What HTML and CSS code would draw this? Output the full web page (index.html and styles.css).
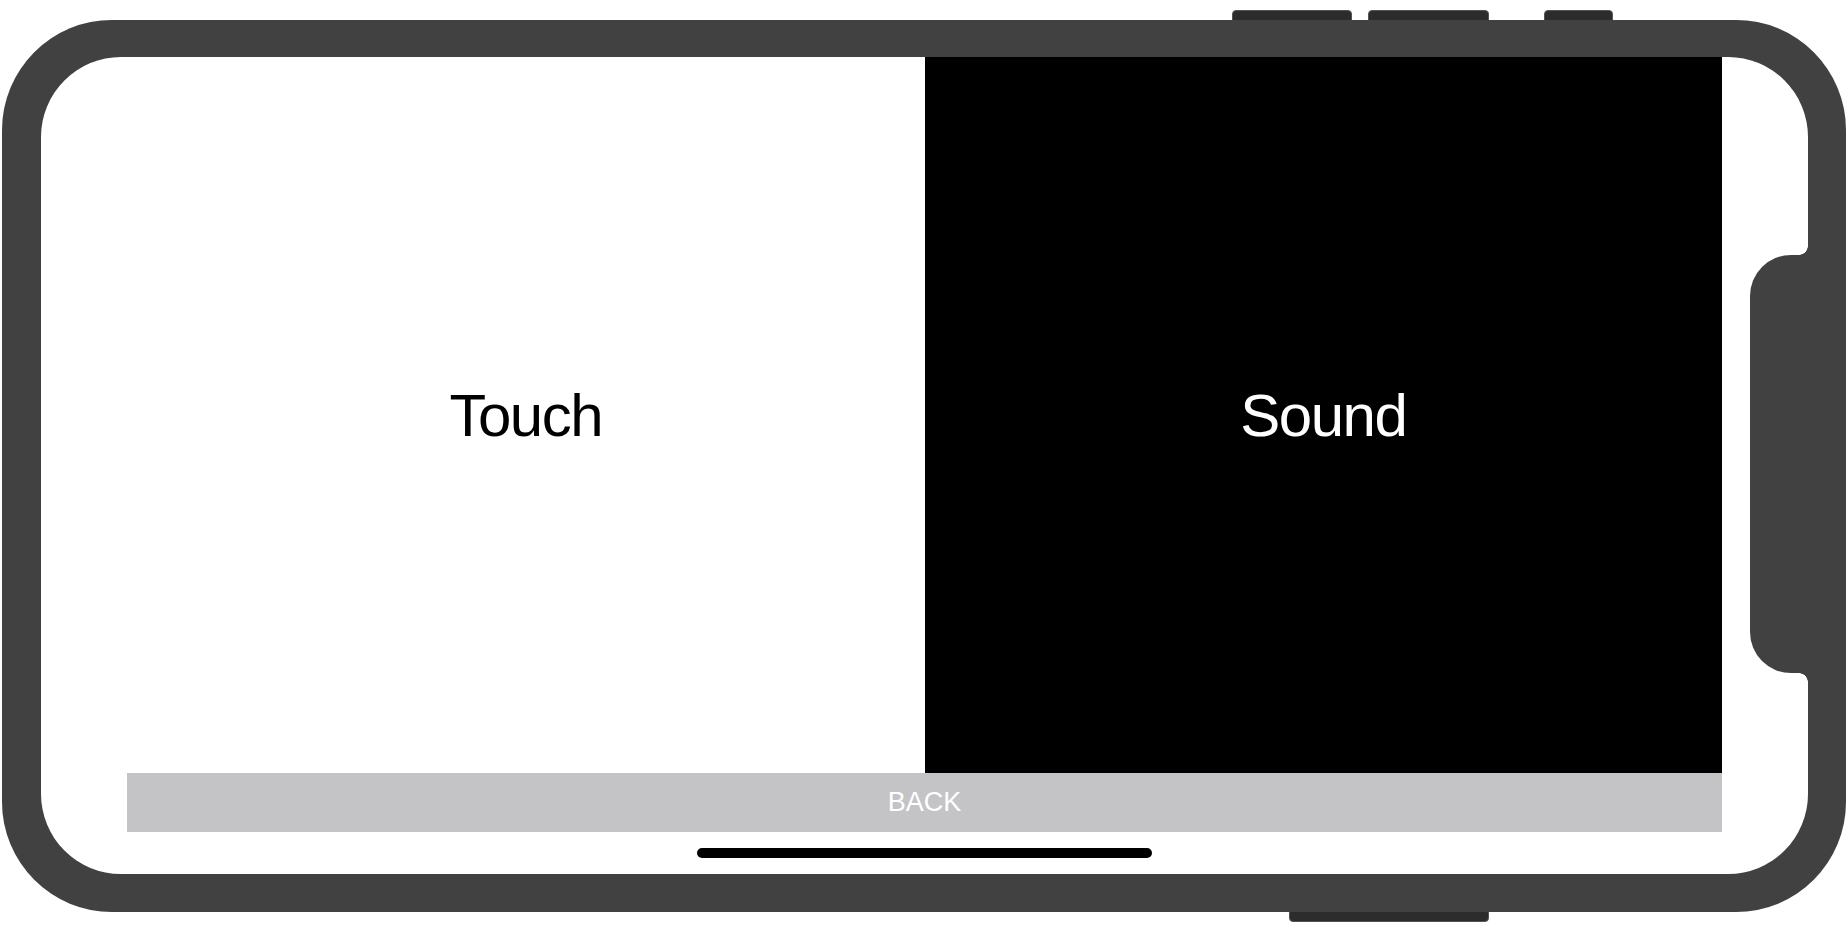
FILE: index.html
```html
<!DOCTYPE html>
<html lang="en">
<head>
    <meta charset="UTF-8">
    <meta name="viewport" content="width=device-width, initial-scale=1.0">
    <title>Touch / Sound</title>
    <link rel="stylesheet" href="styles.css">
</head>
<body>

<div class="device">
    <div class="hw-button top b1"></div>
    <div class="hw-button top b2"></div>
    <div class="hw-button top b3"></div>
    <div class="hw-button bottom b4"></div>

    <div class="screen">
        <div class="app">
            <div class="panels">
                <div class="panel touch">Touch</div>
                <div class="panel sound">Sound</div>
            </div>
            <button type="button" class="back">BACK</button>
        </div>
        <div class="home-indicator"></div>
    </div>

    <div class="notch"></div>
</div>

</body>
</html>
```

FILE: styles.css
```css
body { margin: 0; padding: 20px 0 10px 2px; background-color: #fff; font-family: "Liberation Sans", Arial, sans-serif; }
.device { position: relative; box-sizing: border-box; width: 1844px; height: 892px; padding: 37px 38px 38px 39px; background-color: #414141; border-radius: 110px; }
.hw-button { position: absolute; z-index: -1; background-color: #2c2c2c; border: 1px solid #555; box-sizing: border-box; }
.hw-button.top { top: -10px; height: 14px; border-radius: 4px 4px 0 0; }
.hw-button.bottom { top: 886px; height: 16px; border-radius: 0 0 4px 4px; }
.b1 { left: 1230px; width: 120px; }
.b2 { left: 1366px; width: 121px; }
.b3 { left: 1542px; width: 69px; }
.b4 { left: 1287px; width: 200px; }
.screen { position: relative; height: 100%; background-color: #fff; border-radius: 80px; overflow: hidden; }
.app { display: flex; flex-direction: column; height: 100%; padding: 0 86px 42px; box-sizing: border-box; }
.panels { flex: 1; display: flex; }
.panel { flex: 1; display: flex; justify-content: center; align-items: center; font-size: 60px; letter-spacing: -1.5px; }
.touch { background-color: #fff; color: #000; }
.sound { background-color: #000; color: #fff; }
.back { height: 59px; margin: 0; padding: 0; border: none; border-radius: 0; background-color: #c4c4c6; color: #fff; font-family: "Liberation Sans", Arial, sans-serif; font-size: 27px; }
.home-indicator { position: absolute; left: 656px; bottom: 16px; width: 455px; height: 10px; border-radius: 5px; background-color: #000; }
.notch { position: absolute; left: 1748px; top: 235px; width: 58px; height: 418px; background-color: #414141; border-radius: 41px 0 0 41px; }
.notch::before, .notch::after { content: ""; position: absolute; right: 0; width: 9px; height: 9px; }
.notch::before { top: -9px; background: radial-gradient(circle at 0 0, transparent 8.5px, #414141 9px); }
.notch::after { bottom: -9px; background: radial-gradient(circle at 0 100%, transparent 8.5px, #414141 9px); }
```
